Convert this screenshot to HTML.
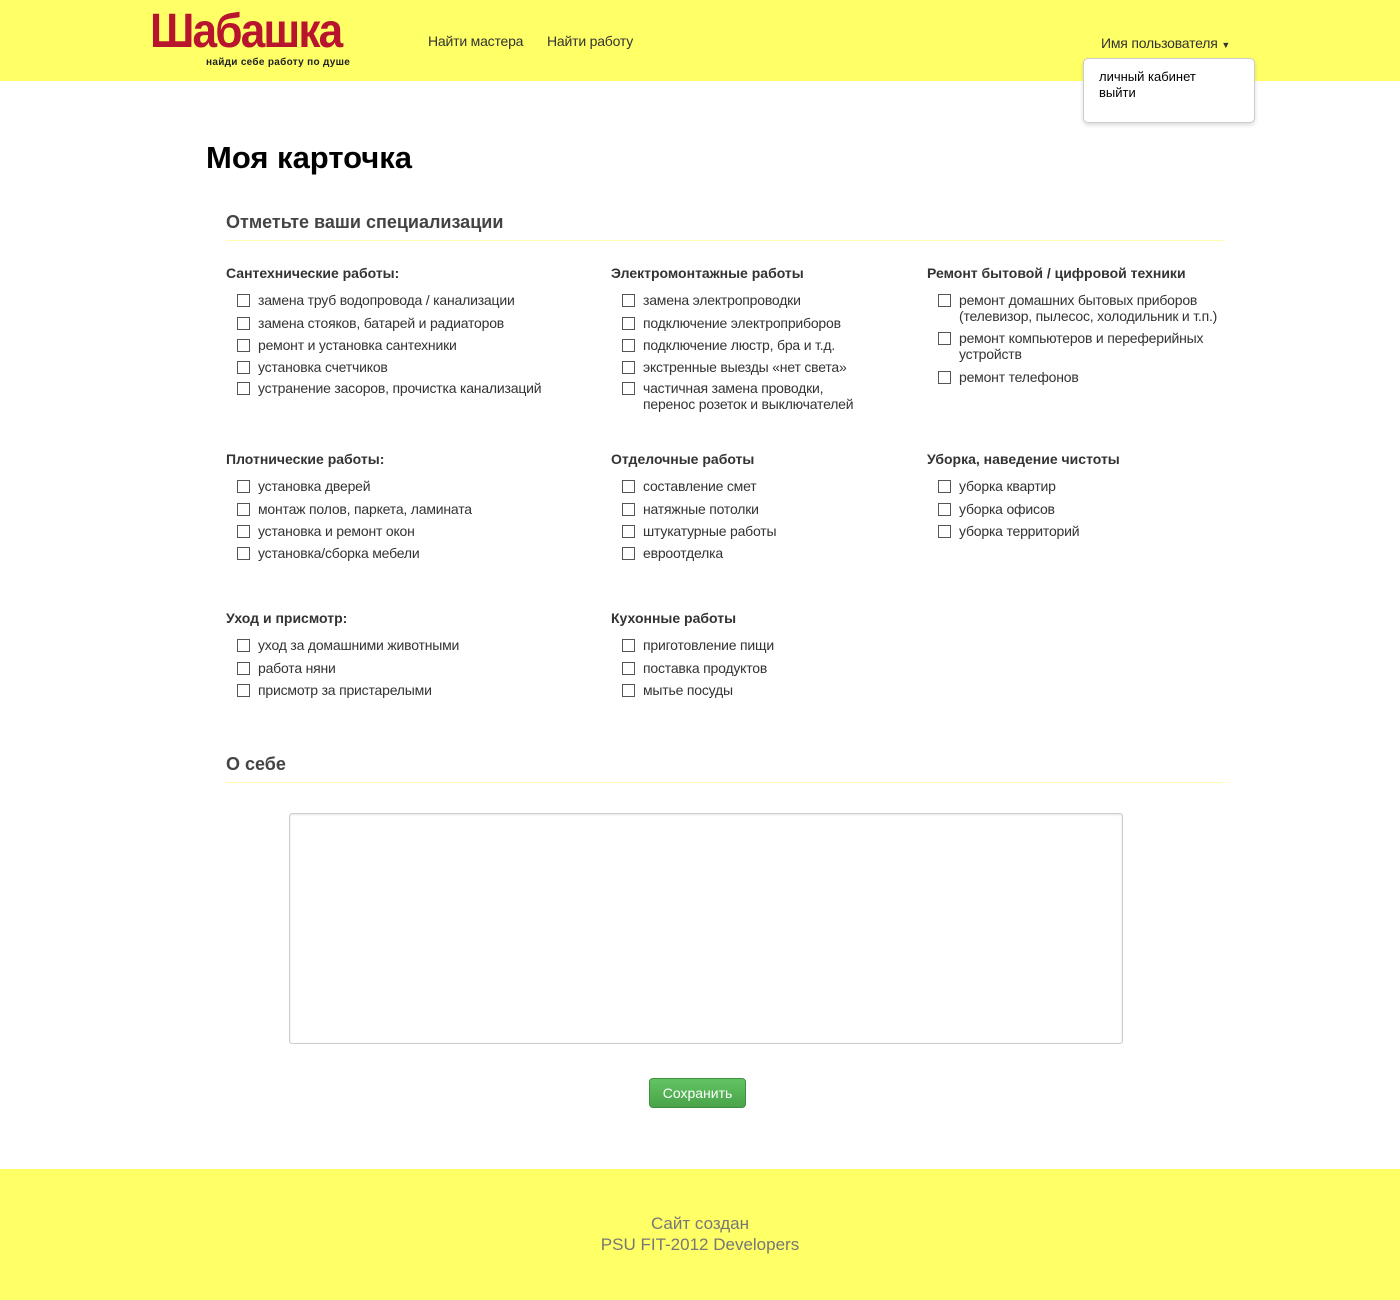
<!DOCTYPE html>
<html><head><meta charset="utf-8"><style>
body{margin:0;width:1400px;height:1300px;position:relative;font-family:"Liberation Sans",sans-serif;color:#333;background:#fff;overflow:hidden}
.a{position:absolute;white-space:nowrap}
.hdr{position:absolute;left:0;top:0;width:1400px;height:81px;background:#ffff66}
.ftr{position:absolute;left:0;top:1169px;width:1400px;height:131px;background:#ffff66;text-align:center;color:#777;font-size:17px;line-height:21px}
.h{font-size:14px;font-weight:bold;color:#333}
.i{font-size:14px;line-height:16px;color:#333;letter-spacing:-0.2px}
.cb{position:absolute;width:11px;height:11px;border:1px solid #555;background:#fff}
.sec{font-size:18px;font-weight:bold;color:#444}
.line{position:absolute;left:226px;width:999px;height:1px;background:#ffffb0}
</style></head><body>
<div class="hdr"></div>
<div class="a" style="left:150px;top:6px;font-weight:bold;font-size:48px;color:#b8142e;letter-spacing:-2px;line-height:52px;transform:scale(0.92,1);transform-origin:left">Шабашка</div>
<div class="a" style="left:206px;top:57px;font-size:10px;font-weight:bold;color:#222;letter-spacing:0.3px">найди себе работу по душе</div>
<div class="a" style="left:428px;top:33px;font-size:14px;color:#333;letter-spacing:-0.2px">Найти мастера</div>
<div class="a" style="left:547px;top:33px;font-size:14px;color:#333;letter-spacing:-0.2px">Найти работу</div>
<div class="a" style="left:1101px;top:35px;font-size:14px;color:#333;letter-spacing:-0.2px">Имя пользователя <span style="font-size:9px">▼</span></div>
<div class="a" style="left:1083px;top:58px;width:170px;height:63px;background:#fff;border:1px solid #ccc;border-radius:5px;box-shadow:0 2px 4px rgba(0,0,0,.15)"></div>
<div class="a" style="left:1099px;top:69px;font-size:13px;line-height:16px;color:#000">личный кабинет<br>выйти</div>
<div class="a" style="left:206px;top:140px;font-size:31px;font-weight:bold;color:#000">Моя карточка</div>
<div class="a sec" style="left:226px;top:212px">Отметьте ваши специализации</div>
<div class="line" style="top:240px"></div>
<div id="c"></div>
<div class="a sec" style="left:226px;top:754px">О себе</div>
<div class="line" style="top:782px"></div>
<div class="a" style="left:289px;top:813px;width:832px;height:229px;border:1px solid #ccc;border-radius:3px;box-shadow:inset 0 1px 2px rgba(0,0,0,.1)"></div>
<div class="a" style="left:649px;top:1078px;width:95px;height:28px;background:linear-gradient(#62c462,#4aa34a);border:1px solid #3e8f3e;border-radius:4px;color:#fff;font-size:14px;text-align:center;line-height:28px">Сохранить</div>
<div class="ftr"><div style="margin-top:44px">Сайт создан<br>PSU FIT-2012 Developers</div></div>
<script>
var g=[[226,273,"Сантехнические работы:",[[300,"замена труб водопровода / канализации"],[323,"замена стояков, батарей и радиаторов"],[345,"ремонт и установка сантехники"],[367,"установка счетчиков"],[388," устранение засоров, прочистка канализаций"]]],
[611,273,"Электромонтажные работы",[[300,"замена электропроводки"],[323,"подключение электроприборов"],[345,"подключение люстр, бра и т.д."],[367,"экстренные выезды «нет света»"],[388," частичная замена проводки,<br> перенос розеток и выключателей"]]],
[927,273,"Ремонт бытовой / цифровой техники",[[300,"ремонт домашних бытовых приборов<br>(телевизор, пылесос, холодильник и т.п.)"],[338,"ремонт компьютеров и переферийных<br>устройств"],[377,"ремонт телефонов"]]],
[226,459,"Плотнические работы:",[[486,"установка дверей"],[509,"монтаж полов, паркета, ламината"],[531,"установка и ремонт окон"],[553,"установка/сборка мебели"]]],
[611,459,"Отделочные работы",[[486,"составление смет"],[509,"натяжные потолки"],[531,"штукатурные работы"],[553,"евроотделка"]]],
[927,459,"Уборка, наведение чистоты",[[486,"уборка квартир"],[509,"уборка офисов"],[531,"уборка территорий"]]],
[226,618,"Уход и присмотр:",[[645,"уход за домашними животными"],[668,"работа няни"],[690,"присмотр за пристарелыми"]]],
[611,618,"Кухонные работы",[[645,"приготовление пищи"],[668,"поставка продуктов"],[690,"мытье посуды"]]]];
var h="";g.forEach(function(s){h+='<div class="a h" style="left:'+s[0]+'px;top:'+(s[1]-8)+'px">'+s[2]+'</div>';
s[3].forEach(function(it){h+='<div class="cb" style="left:'+(s[0]+11)+'px;top:'+(it[0]-6)+'px"></div><div class="a i" style="left:'+(s[0]+32)+'px;top:'+(it[0]-8)+'px">'+it[1]+'</div>';});});
document.getElementById("c").innerHTML=h;
</script>
</body></html>
